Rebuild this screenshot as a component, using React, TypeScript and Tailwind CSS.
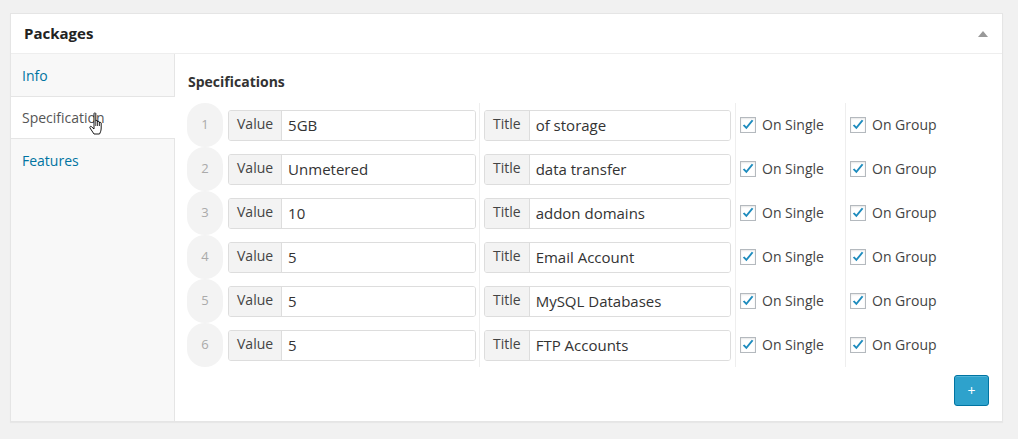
import React from "react";

const rows = [
  { n: 1, value: "5GB", title: "of storage" },
  { n: 2, value: "Unmetered", title: "data transfer" },
  { n: 3, value: "10", title: "addon domains" },
  { n: 4, value: "5", title: "Email Account" },
  { n: 5, value: "5", title: "MySQL Databases" },
  { n: 6, value: "5", title: "FTP Accounts" },
];

function Check({ label }: { label: string }) {
  return (
    <div className="flex items-center gap-[6px]">
      <span className="w-4 h-4 border border-[#b4b9be] bg-white flex items-center justify-center shadow-[inset_0_1px_2px_rgba(0,0,0,0.1)]">
        <svg width="14" height="14" viewBox="0 0 14 14">
          <path d="M1.8 7.4 L5.4 11.2 L12.4 2.8 L10.8 1.8 L5.3 8.6 L3.4 6.4 Z" fill="#1e8cbe" />
        </svg>
      </span>
      <span className="text-[14px] text-[#444] leading-none">{label}</span>
    </div>
  );
}

function Group({ addon, value, width }: { addon: string; value: string; width: string }) {
  return (
    <div className={`flex h-[31px] border border-[#ddd] rounded-[3px] overflow-hidden ${width}`}>
      <span className="bg-[#f3f3f3] border-r border-[#ddd] px-[8px] flex items-center text-[14px] text-[#444] leading-none pb-[3px]">
        {addon}
      </span>
      <span className="flex-1 bg-white flex items-center px-[6px] text-[15px] text-[#333] leading-none pt-[1px]">
        {value}
      </span>
    </div>
  );
}

export default function App() {
  return (
    <div className="w-[1018px] h-[439px] bg-[#f1f1f1] pt-[13px] pl-[10px]" style={{ fontFamily: '"Open Sans", "Noto Sans", sans-serif' }}>
      <div className="w-[993px] h-[409px] bg-white border border-[#e5e5e5] flex flex-col relative shadow-[0_1px_1px_rgba(0,0,0,0.04)]">
        <div className="h-[40px] border-b border-[#eee] flex items-center justify-between pl-[13px] pr-[14px] shrink-0">
          <span className="text-[15px] font-bold text-[#222]">Packages</span>
          <svg width="10" height="6" viewBox="0 0 10 6">
            <path d="M0 6 L5 0 L10 6 Z" fill="#999" />
          </svg>
        </div>
        <div className="flex flex-1">
          <div className="w-[164px] bg-[#f8f8f8] border-r border-[#e5e5e5] flex flex-col shrink-0 relative">
            <div className="h-[43px] border-b border-[#e5e5e5] flex items-center px-[11px] text-[14px] text-[#0074a2]">Info</div>
            <div className="h-[42px] border-b border-[#e5e5e5] bg-white -mr-px flex items-center px-[11px] text-[14px] text-[#555]">Specification</div>
            <div className="h-[42px] flex items-center px-[11px] text-[14px] text-[#0074a2]">Features</div>
            <svg className="absolute left-[78px] top-[58px]" width="18" height="24" viewBox="0 0 18 24">
              <path
                d="M5 1.5 C5 0.7 6.8 0.7 6.8 1.5 L6.8 9 C6.8 8.2 8.6 8.2 8.6 9 L8.6 10 C8.6 9.2 10.4 9.2 10.4 10 L10.4 11 C10.4 10.2 12.2 10.2 12.2 11 L12.2 16 C12.2 19 11 21 10.5 22 L5 22 C4 20 2 18 1 16 C0.4 15 1.4 13.8 2.4 14.6 L5 17 Z"
                fill="#fff"
                stroke="#000"
                strokeWidth="0.9"
                strokeLinejoin="round"
              />
              <path d="M6.8 9 L6.8 14 M8.6 10 L8.6 14 M10.4 11 L10.4 14" stroke="#000" strokeWidth="0.8" />
            </svg>
          </div>
          <div className="flex-1 flex flex-col pl-[12px] pr-[13px]">
            <div className="pt-[17px] pl-px h-[49px] text-[14px] font-bold text-[#333]">Specifications</div>
            <div className="flex flex-col">
              {rows.map((r) => (
                <div key={r.n} className="flex h-[44px]">
                  <div className="w-[36px] flex items-center justify-center bg-[#f3f3f3] rounded-[18px] text-[13px] text-[#aaa] shrink-0">
                    {r.n}
                  </div>
                  <div className="w-[257px] border-r border-[#eee] flex items-center pl-[5px] shrink-0">
                    <Group addon="Value" value={r.value} width="w-[248px]" />
                  </div>
                  <div className="w-[256px] border-r border-[#eee] flex items-center pl-[4px] shrink-0">
                    <Group addon="Title" value={r.title} width="w-[247px]" />
                  </div>
                  <div className="w-[110px] border-r border-[#eee] flex items-center pl-[4px] shrink-0">
                    <Check label="On Single" />
                  </div>
                  <div className="w-[110px] flex items-center pl-[4px] shrink-0">
                    <Check label="On Group" />
                  </div>
                </div>
              ))}
            </div>
            <div className="flex justify-end pt-[8px]">
              <button className="w-[35px] h-[31px] bg-[#2ea2cc] border border-[#0074a2] rounded-[3px] text-white text-[14px] leading-none shadow-[inset_0_1px_0_rgba(120,200,230,0.5)]">
                +
              </button>
            </div>
          </div>
        </div>
      </div>
    </div>
  );
}
